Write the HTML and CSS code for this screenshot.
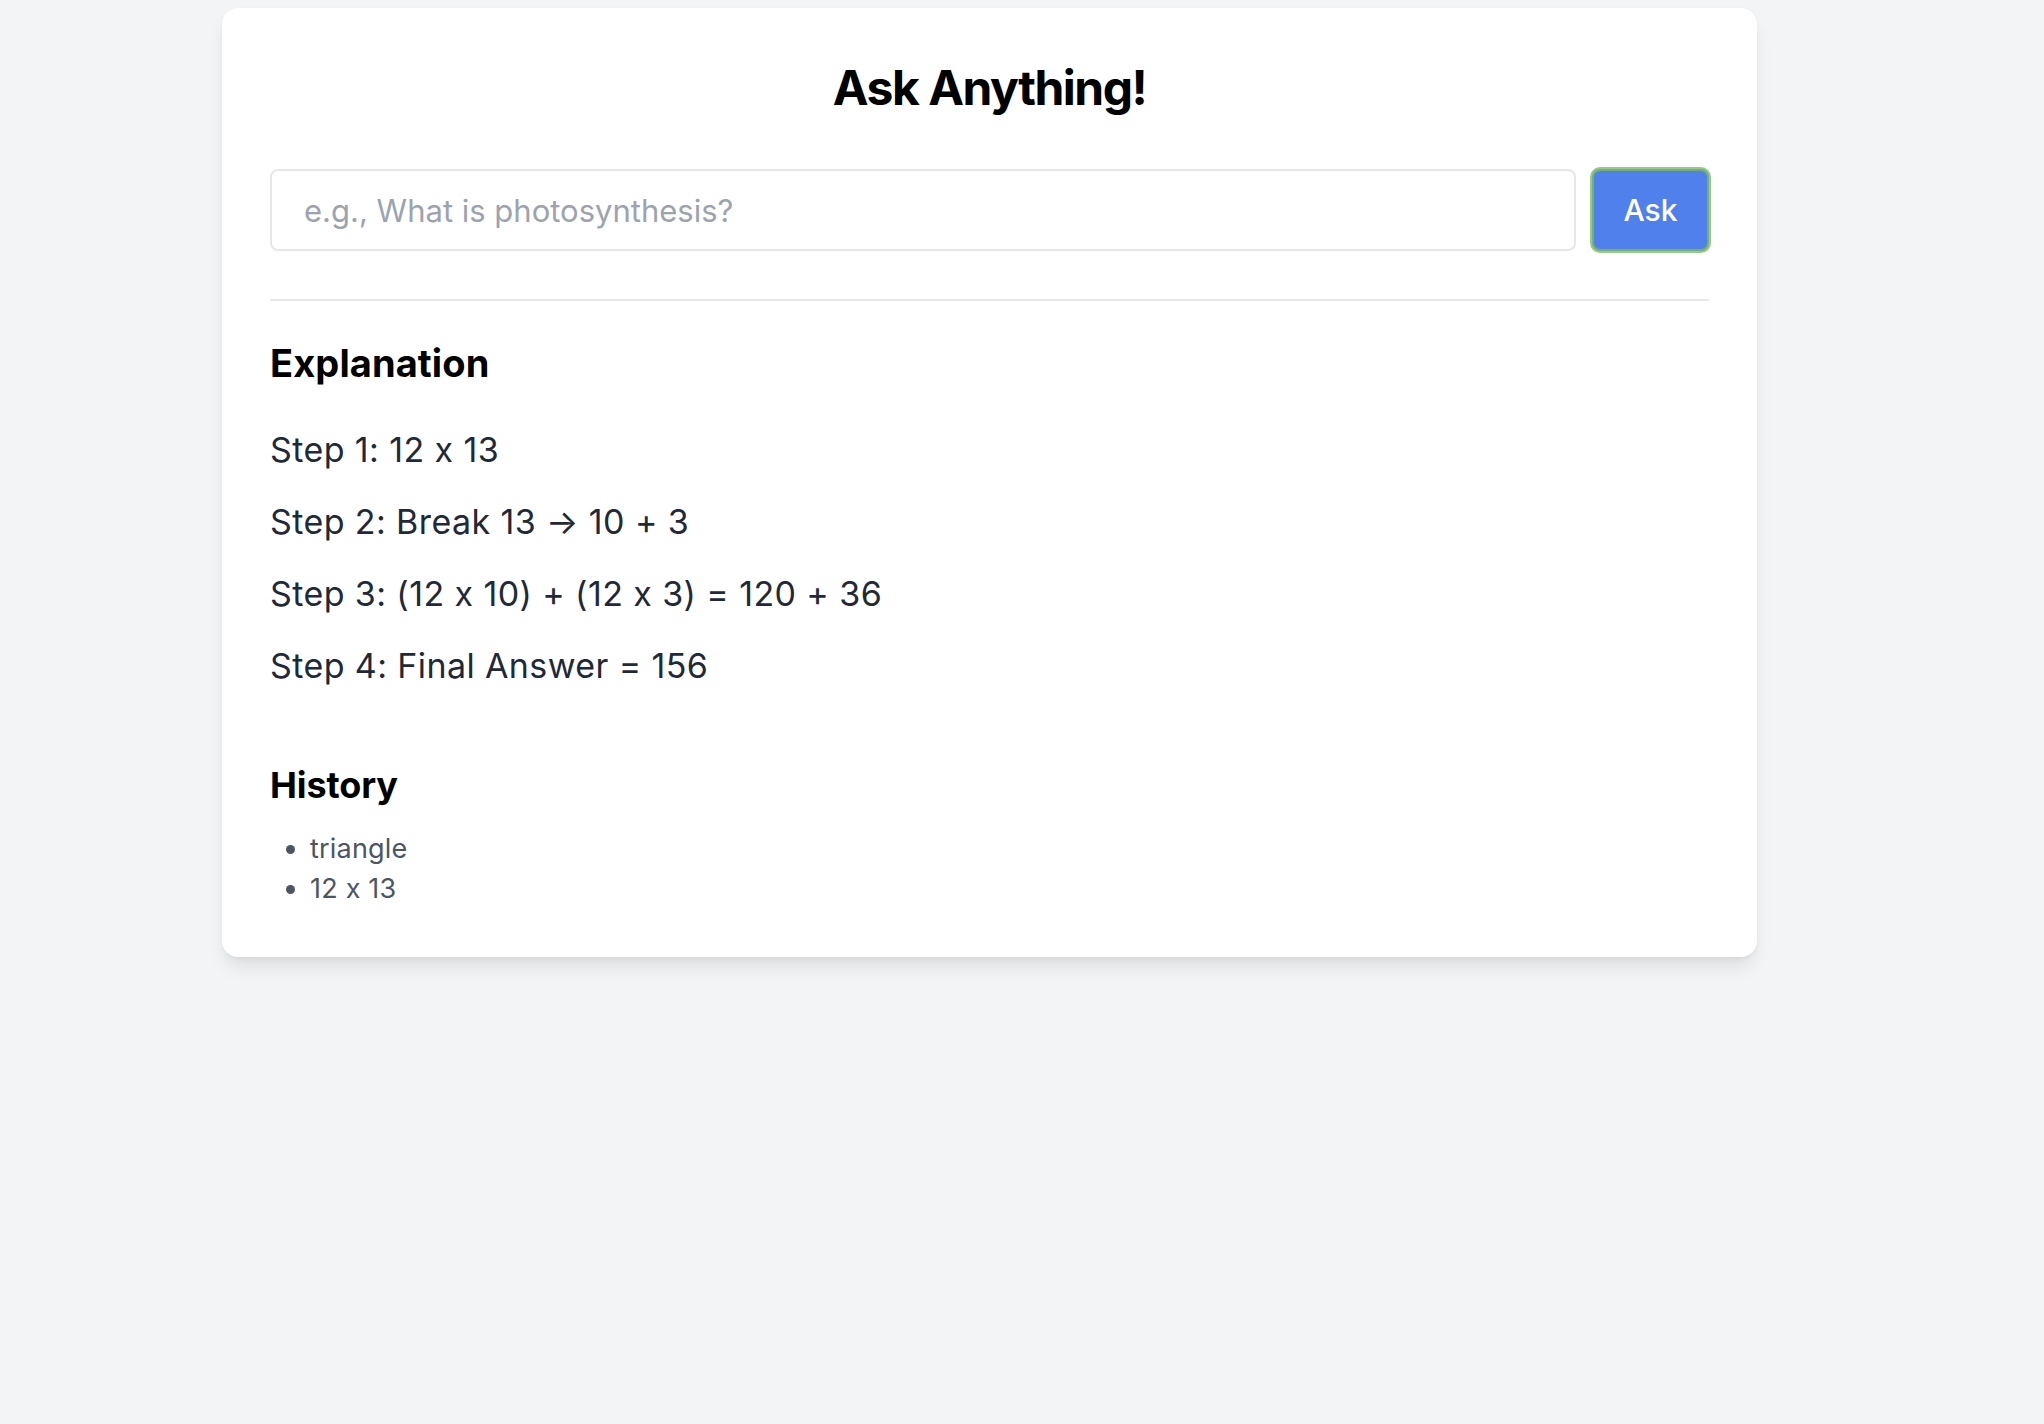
FILE: index.html
```html
<!DOCTYPE html>
<html lang="en">
<head>
<meta charset="utf-8">
<title>Ask Anything!</title>
<link rel="stylesheet" href="styles.css">
</head>
<body>
<div class="page">
  <main class="card">
    <h1 class="title">Ask Anything!</h1>
    <form class="ask-row" onsubmit="return false;">
      <input class="ask-input" type="text" placeholder="e.g., What is photosynthesis?">
      <button class="ask-btn" type="submit">Ask</button>
    </form>
    <hr class="divider">
    <section class="explanation">
      <h2 class="section-title">Explanation</h2>
      <div class="steps">
        <p class="step">Step 1: 12 x 13</p>
        <p class="step">Step 2: Break 13 → 10 + 3</p>
        <p class="step">Step 3: (12 x 10) + (12 x 3) = 120 + 36</p>
        <p class="step">Step 4: Final Answer = 156</p>
      </div>
    </section>
    <section class="history">
      <h2 class="section-title history-title">History</h2>
      <ul class="history-list">
        <li>triangle</li>
        <li>12 x 13</li>
      </ul>
    </section>
  </main>
</div>
</body>
</html>
```
FILE: styles.css
```css
* { box-sizing: border-box; }
html, body { margin: 0; padding: 0; }
body {
  background: #f3f4f6;
  font-family: Inter, "Noto Sans", "Liberation Sans", sans-serif;
  font-feature-settings: "calt" 0;
  color: #1f2937;
  min-height: 1424px;
}
.page {
  padding: 8px 0 0 222px;
}
.card {
  width: 1535px;
  background: #ffffff;
  border-radius: 16px;
  padding: 48px;
  box-shadow: 0 13px 20px -4px rgba(0,0,0,0.09), 0 5px 8px -5px rgba(0,0,0,0.08), 0 0 3px rgba(0,0,0,0.03);
}
.title {
  margin: 0;
  text-align: center;
  font-size: 48px;
  line-height: 64px;
  font-weight: 700;
  color: #000;
  letter-spacing: -1.5px;
}
.ask-row {
  display: flex;
  gap: 16px;
  margin: 49px 0 0 0;
  height: 82px;
}
.ask-input {
  flex: 1;
  min-width: 0;
  border: 2px solid #e6e7eb;
  border-radius: 8px;
  padding: 0 32px;
  font-family: inherit;
  font-feature-settings: "calt" 0;
  font-size: 31px;
  color: #1f2937;
  outline: none;
  background: #fff;
}
.ask-input::placeholder { color: #9ca3af; }
.ask-btn {
  width: 117px;
  border: 2px solid #76b071;
  border-radius: 8px;
  box-shadow: 0 0 0 2px #98c98a;
  background: #4f80ec;
  color: #fff;
  font-family: inherit;
  font-size: 30px;
  font-weight: 500;
  padding: 0;
  cursor: pointer;
}
.divider {
  margin: 48px 0 0 0;
  border: 0;
  height: 2px;
  background: #e7e8ec;
}
.section-title {
  margin: 40px 0 0 0;
  font-size: 38px;
  line-height: 44px;
  font-weight: 700;
  color: #000;
  letter-spacing: 0.1px;
}
.steps {
  display: flex;
  flex-direction: column;
  gap: 32px;
  margin-top: 45px;
}
.step {
  margin: 0;
  font-size: 34px;
  line-height: 40px;
  letter-spacing: 0.4px;
  color: #1f2937;
}
.history-title {
  margin-top: 77px;
  font-size: 36px;
  letter-spacing: -0.1px;
}
.history-list {
  margin: 22px 0 0 0;
  padding-left: 40px;
  list-style: disc;
  font-size: 27px;
  line-height: 40px;
  letter-spacing: 0.2px;
  color: #4b5563;
}
```
